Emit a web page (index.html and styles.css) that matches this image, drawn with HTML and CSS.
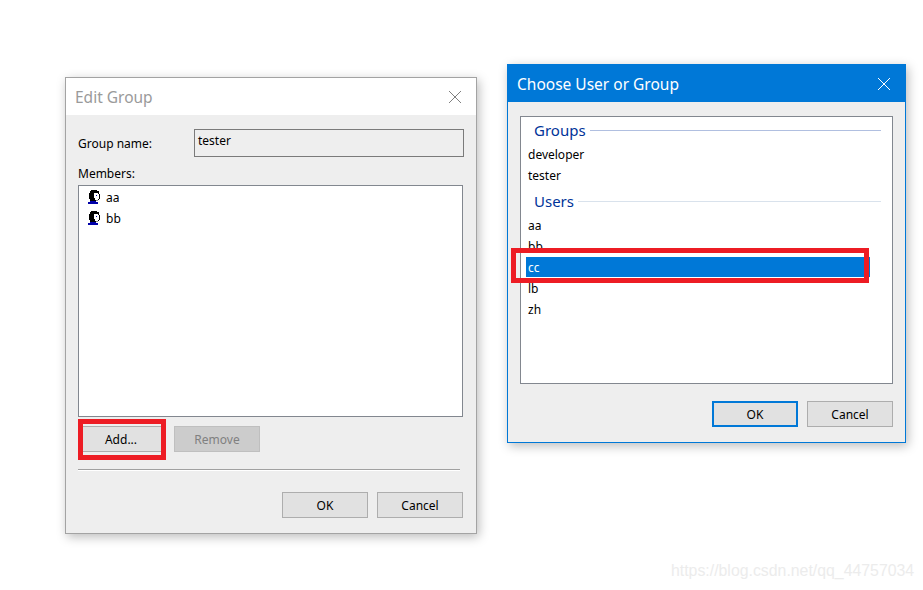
FILE: index.html
```html
<!DOCTYPE html>
<html lang="en">
<head>
    <meta charset="UTF-8">
    <title>Edit Group</title>
    <link rel="stylesheet" href="styles.css">
</head>
<body>
    <svg class="defs" width="0" height="0">
        <symbol id="user" viewBox="0 0 14 14">
            <path fill="#000" d="M4 0h6v1h2v3h1v5h-1v1h-2v1H3V9H2V3h1V1h1z"/>
            <path fill="#fff" d="M7 3h4v1h1v5h-1v1H8V8H7z"/>
            <path fill="#0000a8" d="M9 5h1v1H9zM3 11h6v1h2v2H1v-2h2z"/>
            <path fill="#8a8a8a" d="M9 10h2v1H9z"/>
        </symbol>
    </svg>

    <div class="dialog edit-dialog">
        <div class="titlebar">
            <span class="title">Edit Group</span>
            <svg class="close" width="14" height="14" viewBox="0 0 14 14"><path d="M1 1l12 12M13 1L1 13"/></svg>
        </div>
        <div class="body">
            <div class="name-row">
                <label class="name-label">Group name:</label>
                <div class="name-input">tester</div>
            </div>
            <label class="members-label">Members:</label>
            <div class="list members-list">
                <div class="member"><svg width="14" height="14"><use href="#user"/></svg>aa</div>
                <div class="member"><svg width="14" height="14"><use href="#user"/></svg>bb</div>
            </div>
            <div class="button-row">
                <button class="btn">Add...</button>
                <button class="btn" disabled>Remove</button>
            </div>
            <div class="separator"></div>
            <div class="footer">
                <button class="btn">OK</button>
                <button class="btn">Cancel</button>
            </div>
        </div>
    </div>

    <div class="dialog choose-dialog">
        <div class="titlebar">
            <span class="title">Choose User or Group</span>
            <svg class="close" width="14" height="14" viewBox="0 0 14 14"><path d="M1 1l12 12M13 1L1 13"/></svg>
        </div>
        <div class="body">
            <div class="list choose-list">
                <div class="group-head first">Groups</div>
                <div class="row">developer</div>
                <div class="row">tester</div>
                <div class="group-head second">Users</div>
                <div class="row">aa</div>
                <div class="row">bb</div>
                <div class="row selected">cc</div>
                <div class="row">lb</div>
                <div class="row">zh</div>
            </div>
            <div class="footer">
                <button class="btn default">OK</button>
                <button class="btn">Cancel</button>
            </div>
        </div>
    </div>

    <div class="mark mark-add"></div>
    <div class="mark mark-cc"></div>
    <div class="watermark">https://blog.csdn.net/qq_44757034</div>
</body>
</html>
```

FILE: styles.css
```css
html, body
{
    height: 100%;
    margin: 0;
    padding: 0;
}
body
{
    position: relative;
    overflow: hidden;
    background: #fff;
    color: #000;
    font-family: 'Noto Sans', 'Open Sans', sans-serif;
    font-size: 12px;
}
.defs
{
    position: absolute;
}
.dialog
{
    position: absolute;
    box-sizing: border-box;
    background: #eee;
    border: 1px solid #a3a3a3;
    box-shadow: 2px 3px 10px #0004;
}
.edit-dialog
{
    left: 65px;
    top: 77px;
    width: 412px;
    height: 457px;
}
.choose-dialog
{
    left: 507px;
    top: 64px;
    width: 399px;
    height: 379px;
    border-color: #0078d7;
}
.titlebar
{
    display: flex;
    align-items: center;
    justify-content: space-between;
    box-sizing: border-box;
    height: 37px;
    padding: 0 14px 0 9px;
    background: #fff;
    color: #9a9a9a;
    font-size: 15.5px;
}
.close
{
    fill: none;
    stroke: #808080;
    stroke-width: 1;
}
.choose-dialog .titlebar
{
    background: #0078d7;
    color: #fff;
}
.choose-dialog .close
{
    stroke: #fff;
}
.body
{
    padding: 14px 12px 0 12px;
}
.name-row
{
    display: flex;
    align-items: center;
}
.name-label
{
    width: 116px;
}
.name-input
{
    box-sizing: border-box;
    width: 270px;
    height: 28px;
    padding: 2px 3px;
    border: 1px solid #7a7a7a;
    line-height: 18px;
}
.members-label
{
    display: block;
    height: 16px;
    margin: 8px 0 4px 0;
    line-height: 18px;
}
.list
{
    box-sizing: border-box;
    background: #fff;
    border: 1px solid #82878f;
}
.members-list
{
    width: 385px;
    height: 232px;
    padding: 1px 0 0 8px;
}
.member
{
    display: flex;
    align-items: center;
    gap: 5px;
    height: 20px;
    margin-bottom: 1px;
}
.button-row
{
    display: flex;
    gap: 10px;
    margin-top: 9px;
}
.btn
{
    box-sizing: border-box;
    width: 86px;
    height: 26px;
    padding: 0;
    background: #e1e1e1;
    border: 1px solid #adadad;
    color: #000;
    font-family: inherit;
    font-size: 12px;
}
.btn:disabled
{
    background: #ccc;
    border-color: #bfbfbf;
    color: #808080;
}
.btn.default
{
    border: 2px solid #0078d7;
}
.separator
{
    width: 382px;
    height: 1px;
    margin-top: 17px;
    background: #a0a0a0;
    border-bottom: 1px solid #fff;
}
.footer
{
    display: flex;
    justify-content: flex-end;
    gap: 9px;
    margin-top: 21px;
}
.edit-dialog .footer
{
    margin-right: 1px;
}
.choose-list
{
    width: 373px;
    height: 268px;
    padding: 2px 11px 0 5px;
}
.choose-dialog .footer
{
    margin-top: 17px;
}
.group-head
{
    display: flex;
    align-items: center;
    gap: 4px;
    height: 22px;
    margin-bottom: 3px;
    padding-left: 8px;
    color: #003399;
    font-size: 15px;
}
.group-head::after
{
    content: "";
    flex: 1;
    height: 1px;
}
.group-head.first::after
{
    background: #b0bfe0;
}
.group-head.second::after
{
    background: #d9e2ec;
}
.group-head.second
{
    margin-top: 5px;
}
.row
{
    height: 20px;
    margin: 0 11px 1px 0;
    padding-left: 2px;
    line-height: 22px;
}
.row.selected
{
    background: #0078d7;
    color: #fff;
}
.mark
{
    position: absolute;
    box-sizing: border-box;
    border: 5px solid #ed1c24;
}
.mark-add
{
    left: 78px;
    top: 419px;
    width: 88px;
    height: 41px;
}
.mark-cc
{
    left: 511px;
    top: 248px;
    width: 358px;
    height: 35px;
}
.watermark
{
    position: absolute;
    left: 671px;
    top: 562px;
    color: #ececec;
    font-family: 'Liberation Sans', sans-serif;
    font-size: 15.85px;
    white-space: nowrap;
}
```
